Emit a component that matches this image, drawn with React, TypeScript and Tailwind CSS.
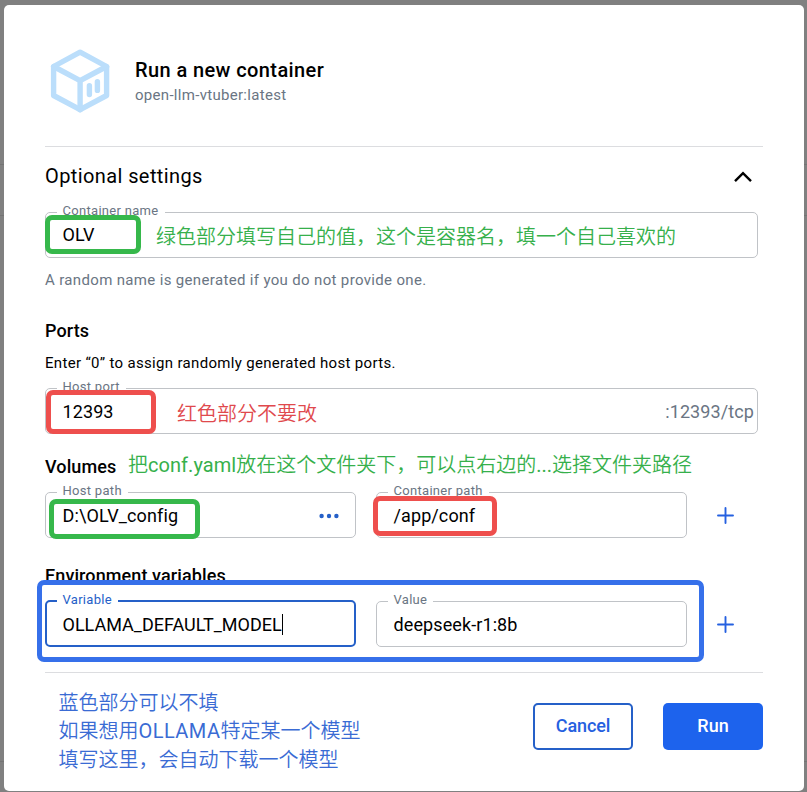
import type { ReactNode } from "react";

type FieldProps = {
  label: string;
  value: string;
  className: string;
  valueClass?: string;
  focused?: boolean;
  trailing?: ReactNode;
};

function Field({ label, value, className, valueClass = "", focused = false, trailing }: FieldProps) {
  return (
    <div
      className={`relative flex items-center justify-between rounded-[5px] ${
        focused ? "h-[47px] border-2 border-[#2560c8] pl-[15.5px]" : "h-[46px] border border-[#c0c3c7] pl-[16.5px]"
      } ${className}`}
    >
      <span
        className={`absolute px-[6px] bg-white text-[13px] leading-[14px] tracking-[0.3px] whitespace-nowrap ${
          focused ? "-top-[9px] left-[9.5px] text-[#2560c8]" : "-top-[9px] left-[10.5px] text-[#6a7583]"
        }`}
      >
        {label}
      </span>
      <span className={`flex items-center text-[18px] leading-6 text-black whitespace-nowrap ${valueClass}`}>
        {value}
        {focused && <span className="h-[21px] w-px bg-black" />}
      </span>
      {trailing}
    </div>
  );
}

function Dots() {
  return (
    <svg width="20" height="6" viewBox="0 0 20 6" className="mt-px mr-[16.5px] fill-[#2560c8]">
      <circle cx="2.6" cy="3" r="2.2" />
      <circle cx="10" cy="3" r="2.2" />
      <circle cx="17.4" cy="3" r="2.2" />
    </svg>
  );
}

function Plus() {
  return (
    <svg width="17" height="17" viewBox="0 0 17 17" className="mt-px ml-[30px] stroke-[#2560e0]" strokeWidth="1.9" strokeLinecap="round">
      <path d="M8.5 1v15M1 8.5h15" />
    </svg>
  );
}

function ContainerIcon() {
  return (
    <svg width="60" height="64" viewBox="0 0 60 64" fill="none" className="stroke-[#bbdefb]" strokeWidth="5.4" strokeLinejoin="round" strokeLinecap="round">
      <path d="M30.1 3.1 56.6 17.5v29L30.1 60.7 3.6 46.5v-29Z" />
      <path d="M3.6 17.5 30.1 31.7 56.6 17.5M30.1 31.7v29" />
      <path d="M39.4 36.8v8.8M47.4 32.6v8.8" />
    </svg>
  );
}

export default function App() {
  return (
    <div className="relative h-[792px] w-[807px] overflow-hidden bg-[#808080] pt-[5px] pl-[4px] font-['Roboto','Noto_Sans_CJK_SC',sans-serif] text-black">
      <div className="absolute top-[164px] left-0 h-px w-full bg-[#747474]" />
      <div className="absolute top-[215px] left-0 h-px w-full bg-[#747474]" />
      <div className="absolute top-[761px] left-0 h-px w-full bg-[#747474]" />
      <main className="relative h-[786px] w-[800px] rounded-[5px] bg-white px-[41px]">
        <header className="flex h-[142px] items-start border-b border-[#dcdde0] pt-[44px] pl-[5px]">
          <ContainerIcon />
          <div className="pt-[8px] pl-[25px]">
            <h1 className="text-[20px] leading-[26px] font-medium tracking-[0.4px]">Run a new container</h1>
            <p className="text-[15px] leading-[24px] tracking-[0.3px] text-[#6a7583]">open-llm-vtuber:latest</p>
          </div>
        </header>

        <div className="flex h-[65px] items-start justify-between pt-[16px] pr-[11px]">
          <h2 className="text-[20px] leading-[26px] tracking-[0.4px]">Optional settings</h2>
          <svg width="18" height="12" viewBox="0 0 18 12" fill="none" stroke="black" strokeWidth="2.4" className="mt-[8px]">
            <path d="M1 10.2 9 2.2l8 8" />
          </svg>
        </div>
        <Field label="Container name" value="OLV" className="w-[713px]" />
        <p className="h-[57px] pt-[10px] text-[15px] leading-[24px] tracking-[0.34px] text-[#6a7583]">
          A random name is generated if you do not provide one.
        </p>

        <h3 className="h-[33px] pt-[3px] text-[18px] leading-[26px] font-medium tracking-[0.1px]">Ports</h3>
        <p className="h-[40px] pt-[3px] text-[15px] leading-[24px] tracking-[0.32px]">
          Enter “0” to assign randomly generated host ports.
        </p>
        <Field
          label="Host port"
          value="12393"
          className="w-[713px]"
          valueClass="pt-[2px] tracking-[0.1px]"
          trailing={<span className="mr-[3px] text-[18px] tracking-[0.1px] text-[#6a7583]">:12393/tcp</span>}
        />

        <h3 className="h-[58px] pt-[20px] text-[18px] leading-[26px] font-medium tracking-[0.1px]">Volumes</h3>
        <div className="flex items-center">
          <Field label="Host path" value="D:\OLV_config" className="w-[311px]" valueClass="pt-[2px] tracking-[0.12px]" trailing={<Dots />} />
          <Field label="Container path" value="/app/conf" className="ml-[20px] w-[311px]" valueClass="pt-[2px] tracking-[0.1px]" />
          <Plus />
        </div>

        <h3 className="h-[63px] pt-[25px] text-[18px] leading-[26px] font-medium tracking-[0.1px]">Environment variables</h3>
        <div className="flex items-center">
          <Field label="Variable" value="OLLAMA_DEFAULT_MODEL" className="-mt-px w-[311px]" valueClass="pt-[2px]" focused />
          <Field label="Value" value="deepseek-r1:8b" className="ml-[20px] w-[311px]" valueClass="pt-[2px] tracking-[0.1px]" />
          <Plus />
        </div>

        <footer className="mt-[25px] flex justify-between border-t border-[#dcdde0] pt-[15px]">
          <div className="pt-[0.5px] pl-[13.5px] text-[20px] leading-[28.5px] font-[350] text-[#3a6bd4]">
            <p>蓝色部分可以不填</p>
            <p>如果想用<span className="font-normal tracking-[0.45px]">OLLAMA</span>特定某一个模型</p>
            <p>填写这里，会自动下载一个模型</p>
          </div>
          <div className="mt-[15px] flex gap-[30px]">
            <button className="h-[47px] w-[100px] rounded-[5px] border-2 border-[#2560c8] pb-[2px] text-[18px] font-medium tracking-[-0.1px] text-[#2560e0]">Cancel</button>
            <button className="h-[47px] w-[100px] rounded-[5px] bg-[#1d63ed] pb-[2px] text-[18px] font-medium text-white">Run</button>
          </div>
        </footer>
      </main>

      {/* Marker boxes and notes drawn over the dialog */}
      <div className="absolute top-[215px] left-[45px] h-[39px] w-[96px] rounded-[7px] border-[5px] border-[#36b84b]" />
      <div className="absolute top-[390px] left-[46px] h-[44px] w-[110px] rounded-[7px] border-[5px] border-[#ee4f4d]" />
      <div className="absolute top-[499px] left-[49px] h-[40px] w-[151px] rounded-[7px] border-[5px] border-[#36b84b]" />
      <div className="absolute top-[496px] left-[373px] h-[40px] w-[124px] rounded-[7px] border-[5px] border-[#ee4f4d]" />
      <div className="absolute top-[580px] left-[37px] h-[82px] w-[667px] rounded-[7px] border-[5px] border-[#3670ea]" />
      <p className="absolute top-[223px] left-[156px] text-[20px] leading-[28px] font-[350] whitespace-nowrap text-[#36b04b]">绿色部分填写自己的值，这个是容器名，填一个自己喜欢的</p>
      <p className="absolute top-[400px] left-[177px] text-[20px] leading-[28px] font-[350] whitespace-nowrap text-[#e0494d]">红色部分不要改</p>
      <p className="absolute top-[451px] left-[128px] text-[20px] leading-[28px] font-[350] whitespace-nowrap text-[#36b04b]">把<span className="font-normal tracking-[0.05px]">conf.yaml</span>放在这个文件夹下，可以点右边的<span className="font-normal">...</span>选择文件夹路径</p>
    </div>
  );
}
